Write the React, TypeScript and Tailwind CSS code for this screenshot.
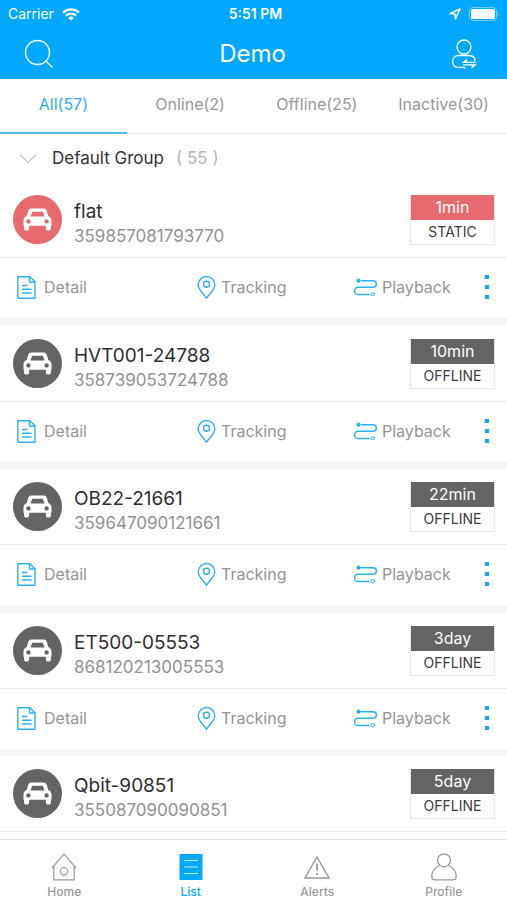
import { useState } from 'react';
import type { ReactNode } from 'react';
import clsx from 'clsx';

interface Device {
  name: string;
  imei: string;
  time: string;
  status: 'STATIC' | 'OFFLINE';
  collapsed?: boolean;
}

const devices: Device[] = [
  { name: 'flat', imei: '359857081793770', time: '1min', status: 'STATIC' },
  { name: 'HVT001-24788', imei: '358739053724788', time: '10min', status: 'OFFLINE' },
  { name: 'OB22-21661', imei: '359647090121661', time: '22min', status: 'OFFLINE' },
  { name: 'ET500-05553', imei: '868120213005553', time: '3day', status: 'OFFLINE' },
  { name: 'Qbit-90851', imei: '355087090090851', time: '5day', status: 'OFFLINE', collapsed: true },
];

const tabs = ['All(57)', 'Online(2)', 'Offline(25)', 'Inactive(30)'];

function StatusBar() {
  return (
    <div className="grid grid-cols-3 items-center h-7 px-2 text-sm">
      <div className="flex items-center gap-2">
        <span>Carrier</span>
        <svg className="w-[18px] h-[13px]" viewBox="0 0 18 13" fill="none" stroke="currentColor" strokeWidth="2.3">
          <path d="M1 4.7a11.5 11.5 0 0 1 16 0" />
          <path d="M3.9 7.8a7.3 7.3 0 0 1 10.2 0" />
          <path d="M9 12.6 6.2 9.9a4 4 0 0 1 5.6 0z" fill="currentColor" stroke="none" />
        </svg>
      </div>
      <span className="pl-1 text-center font-semibold">5:51 PM</span>
      <div className="flex items-center justify-end gap-2">
        <svg className="w-3 h-3" viewBox="0 0 12 12" fill="none" stroke="currentColor" strokeWidth="1.5" strokeLinejoin="round">
          <path d="M11 1 1 5.6l4.9.5.5 4.9z" />
        </svg>
        <svg className="w-[30px] h-[14px]" viewBox="0 0 30 14">
          <rect x="0.5" y="0.5" width="27" height="13" rx="3.5" fill="none" stroke="#6fcfff" />
          <rect x="2" y="2" width="24" height="10" rx="1.5" fill="#fff" />
          <path d="M28.6 4.8v4.4q1.2-.8 1.2-2.2t-1.2-2.2z" fill="#6fcfff" />
        </svg>
      </div>
    </div>
  );
}

function CarIcon() {
  return (
    <svg className="w-[29px] h-[23px]" viewBox="0 0 29 23" fill="#fff" fillRule="evenodd">
      <path d="M8.3 .5h12.4c1.6 0 2.5.8 3 2.2L25.3 8c2.1.7 3.2 2.2 3.2 4.4v5.3h-.6v3c0 1.1-.8 1.8-2.5 1.8s-2.5-.7-2.5-1.8v-3H6.100v3c0 1.100-.8 1.800-2.500 1.800s-2.500-.7-2.500-1.800v-3H.5v-5.300C.5 10.200 1.600 8.700 3.700 8l1.600-5.300C5.800 1.300 6.700.5 8.300.5zM9.200 3.700 7.500 8.600h14L19.800 3.700zM5.400 11.200a2.200 2.200 0 1 0 0 4.400 2.200 2.200 0 0 0 0-4.400zM23.600 11.200a2.200 2.200 0 1 0 0 4.400 2.200 2.200 0 0 0 0-4.400z" />
    </svg>
  );
}

function DetailIcon() {
  return (
    <svg className="w-5 h-[23px]" viewBox="0 0 20 23" fill="none" stroke="currentColor" strokeWidth="1.4" strokeLinejoin="round">
      <path d="M1.8.8h12L19 5.8V22.2H1.8zM13.5.8V6H19" />
      <path d="M6 9.5h5.5M6 13.200h9.500M6 17h9.500" />
    </svg>
  );
}

function TrackingIcon() {
  return (
    <svg className="w-[19px] h-[23px]" viewBox="0 0 19 23" fill="none" stroke="currentColor" strokeWidth="1.4">
      <path d="M9.5 22.2C7.2 18.6 1.2 13.5 1.2 8.9a8.3 8.3 0 0 1 16.6 0c0 4.600-6 9.700-8.300 13.300z" />
      <circle cx="9.5" cy="8.3" r="3" />
    </svg>
  );
}

function PlaybackIcon() {
  return (
    <svg className="w-[23px] h-[19px]" viewBox="0 0 23 19" fill="none" stroke="currentColor" strokeWidth="1.5" strokeLinecap="round">
      <path d="M7.5 2.7H19a3 3 0 0 1 0 6.600H4.200a3.600 3.600 0 0 0 0 7.200h11" />
      <circle cx="4.5" cy="2.7" r="2.1" fill="currentColor" stroke="none" />
      <circle cx="18.8" cy="16.2" r="1.7" strokeWidth="1" />
    </svg>
  );
}

function Action({ icon, label, wide }: { icon: ReactNode; label: string; wide?: boolean }) {
  return (
    <button type="button" className={clsx('flex items-center text-base text-[#959595]', wide ? 'gap-2' : 'gap-[5px]')}>
      <span className="text-[#2bb0f8]">{icon}</span>
      {label}
    </button>
  );
}

function DeviceCard({ device }: { device: Device }) {
  const offline = device.status === 'OFFLINE';

  return (
    <li className="border-b-8 even:border-b-7 last:border-b-0 border-[#f6f6f6]">
      <div className="flex items-center h-[76px] pl-[13px] pr-3 border-b border-[#ececec]">
        <div
          className={clsx(
            'flex items-center justify-center w-[49px] h-[49px] rounded-full',
            offline ? 'bg-[#646464]' : 'bg-[#e86a6f]'
          )}
        >
          <CarIcon />
        </div>
        <div className="flex-1 ml-3 pt-2">
          <h2 className="text-[19px] leading-6 text-[#2f2f2f]">{device.name}</h2>
          <p className="text-[17px] leading-6 text-[#929292]">{device.imei}</p>
        </div>
        <div className="w-[85px] border border-t-0 border-[#e6e6e6] text-center">
          <div
            className={clsx(
              'h-[25px] leading-[25px] text-base text-white',
              offline ? 'bg-[#646464]' : 'bg-[#e86a6f]'
            )}
          >
            {device.time}
          </div>
          <div className="h-6 leading-6 text-sm text-[#3c3c3c]">{device.status}</div>
        </div>
      </div>

      {/* Action row */}
      {!device.collapsed && (
        <div className="grid grid-cols-[181fr_157fr_129fr_8px] items-center h-[60px] px-4 pb-[2px]">
          <Action icon={<DetailIcon />} label="Detail" wide />
          <Action icon={<TrackingIcon />} label="Tracking" />
          <Action icon={<PlaybackIcon />} label="Playback" />
          <button type="button" aria-label="More" className="flex flex-col items-center gap-[6px]">
            <span className="w-1 h-1 bg-[#12a5f4]" />
            <span className="w-1 h-1 bg-[#12a5f4]" />
            <span className="w-1 h-1 bg-[#12a5f4]" />
          </button>
        </div>
      )}
    </li>
  );
}

const navItems = [
  {
    label: 'Home',
    icon: (
      <svg className="w-[26px] h-7" viewBox="0 0 26 28" fill="none" stroke="currentColor" strokeWidth="1.2">
        <path d="M1 15 13 1.2 25 15M2.800 13v13.800h20.400V13" />
        <circle cx="13" cy="18.3" r="3.8" />
      </svg>
    ),
  },
  {
    label: 'List',
    icon: (
      <svg className="w-[26px] h-7" viewBox="0 0 26 28">
        <path d="M1.5 1h23v26h-23z" fill="#00a8ff" />
        <path d="M6 7.5h14M6 14h14M6 20.5h14" stroke="#c5ecff" strokeWidth="1.2" />
      </svg>
    ),
  },
  {
    label: 'Alerts',
    icon: (
      <svg className="w-[26px] h-7" viewBox="0 0 26 28" fill="none" stroke="currentColor" strokeWidth="1.4">
        <path d="M13 4 25 25H1z" />
        <path d="M13 11v6.500M13 20v2" strokeWidth="1.8" />
      </svg>
    ),
  },
  {
    label: 'Profile',
    icon: (
      <svg className="w-[26px] h-7" viewBox="0 0 26 28" fill="none" stroke="currentColor" strokeWidth="1.3">
        <circle cx="13" cy="7.3" r="6.5" />
        <path d="M8.8 12.500C4 14.300.8 18.500.8 23.500c0 2.300.8 3.300 2.800 3.300h18.800c2 0 2.800-1 2.800-3.300 0-5-3.200-9.200-8-11" />
      </svg>
    ),
  },
];

export default function App() {
  const [tab, setTab] = useState(tabs[0]);
  const [page, setPage] = useState('List');

  return (
    <div className="flex flex-col h-screen bg-white font-['Inter','Liberation_Sans',sans-serif]">
      <header className="bg-[#00a8ff] text-white">
        <StatusBar />
        <div className="flex items-center justify-between h-[51px] px-6">
          <button type="button" aria-label="Search">
            <svg className="w-[30px] h-[30px]" viewBox="0 0 30 30" fill="none" stroke="currentColor" strokeWidth="1.4" strokeLinecap="round">
              <circle cx="13.5" cy="13.5" r="12" />
              <path d="m22 22 6 6" />
            </svg>
          </button>
          <h1 className="text-2xl">Demo</h1>
          <button type="button" aria-label="Switch account" className="mr-[6px]">
            <svg className="w-[26px] h-[30px]" viewBox="0 0 26 30" fill="none" stroke="currentColor" strokeWidth="1.3" strokeLinecap="round">
              <circle cx="13" cy="8" r="7" />
              <path d="M18.500 16.500H7.500C4 16.500 1.700 19 1.700 22.500c0 3.700 1.800 5.800 5 5.800h5.300c1 0 1 .7 2 .7M18.500 16.500c3.300.2 5.300 2.200 5.500 5" />
              <path d="M24.300 23.400H12.500l3-2.500v2.500M12.500 25.800h11.800l-3 2.500v-2.500" />
            </svg>
          </button>
        </div>
      </header>

      <nav className="grid grid-cols-4 h-[55px] border-b border-[#e8e8e8]">
        {tabs.map((item) => (
          <button
            key={item}
            type="button"
            onClick={() => setTab(item)}
            className={clsx(
              'pb-1 -mb-px text-base border-b-2',
              item === tab ? 'text-[#2baef5] border-[#4db9f3]' : 'text-[#999999] border-transparent'
            )}
          >
            {item}
          </button>
        ))}
      </nav>

      <main className="flex-1 min-h-0 overflow-y-auto [scrollbar-width:none]">
        <button type="button" className="flex items-center w-full h-12 px-5 pt-[2px] text-[17px] text-[#333333]">
          <svg className="w-4 h-[10px] mr-4" viewBox="0 0 16 10" fill="none" stroke="#c4c4c4" strokeWidth="1.2">
            <path d="m.5 1 7.5 7.5L15.5 1" />
          </svg>
          Default Group
          <span className="ml-3 text-[#b5b5b5]">( 55 )</span>
        </button>
        <ul>
          {devices.map((device) => (
            <DeviceCard key={device.imei} device={device} />
          ))}
        </ul>
      </main>

      {/* Bottom navigation */}
      <nav className="grid grid-cols-4 h-[61px] pl-px border-t border-[#e4e4e4]">
        {navItems.map((item) => (
          <button
            key={item.label}
            type="button"
            onClick={() => setPage(item.label)}
            className={clsx(
              'flex flex-col items-center pt-[13px] text-xs font-medium',
              item.label === page ? 'text-[#00a8ff]' : 'text-[#9b9b9b]'
            )}
          >
            {item.icon}
            <span className="mt-[3px]">{item.label}</span>
          </button>
        ))}
      </nav>
    </div>
  );
}
